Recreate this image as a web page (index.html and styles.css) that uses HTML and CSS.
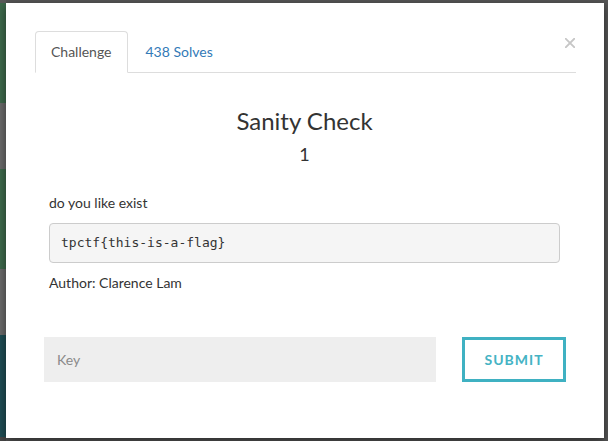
FILE: index.html
```html
<!DOCTYPE html>
<html lang="en">
<head>
<meta charset="utf-8">
<title>Sanity Check</title>
<link rel="stylesheet" href="styles.css">
</head>
<body>
  <div class="modal">
    <div class="tabs">
      <div class="tab active">Challenge</div>
      <div class="tab link">438 Solves</div>
      <button class="close" aria-label="Close">
        <svg width="10" height="10" viewBox="0 0 10 10"><path d="M0.8 0.8 L9.2 9.2 M9.2 0.8 L0.8 9.2" stroke="#c6c6c6" stroke-width="1.9" stroke-linecap="square"/></svg>
      </button>
    </div>
    <div class="pane">
      <h3 class="title">Sanity Check</h3>
      <h4 class="value">1</h4>
      <p class="desc">do you like exist</p>
      <pre class="flag">tpctf{this-is-a-flag}</pre>
      <p class="author">Author: Clarence Lam</p>
    </div>
    <form class="submit-row" onsubmit="return false">
      <input class="key" type="text" placeholder="Key">
      <button class="submit" type="submit">Submit</button>
    </form>
  </div>
</body>
</html>
```
FILE: styles.css
```css
html, body {
  margin: 0;
  height: 100%;
}
body {
  box-sizing: border-box;
  padding: 3px 4px 3px 6px;
  background-color: #555555;
  background-image: linear-gradient(to bottom,
    #5b5b5b 0 3px,
    #3e6a4c 3px 103px,
    #6a6a6a 103px 169px,
    #3e6a4c 169px 269px,
    #6a6a6a 269px 335px,
    #1f4d54 335px 437px,
    #474747 437px);
  background-size: 6px 100%;
  background-repeat: no-repeat;
  font-family: Lato, "Open Sans", sans-serif;
  color: #333;
  overflow: hidden;
}
.modal {
  box-sizing: border-box;
  width: 598px;
  height: 435px;
  background: #fff;
  padding: 28px 28px 0 29px;
  box-shadow: 0 3px 9px rgba(0, 0, 0, 0.5);
}
.tabs {
  display: flex;
  align-items: flex-start;
  border-bottom: 1px solid #dddddd;
}
.tab {
  font-size: 14px;
  line-height: 20px;
  padding: 10px 15px;
  border: 1px solid transparent;
  border-radius: 4px 4px 0 0;
  margin-right: 2px;
  margin-bottom: -1px;
}
.tab.active {
  color: #555555;
  background: #fff;
  border-color: #dddddd #dddddd transparent;
}
.tab.link {
  color: #337ab7;
}
.close {
  margin-left: auto;
  margin-top: 7px;
  margin-right: 1px;
  padding: 0;
  border: 0;
  background: none;
  width: 10px;
  height: 10px;
  display: flex;
}
.pane {
  padding: 0 16px 0 14px;
}
.title {
  margin: 35px 0 0;
  font-size: 24px;
  line-height: 1.1;
  font-weight: 400;
  text-align: center;
  color: #333;
}
.value {
  margin: 11px 0 0;
  font-size: 18px;
  line-height: 1.1;
  font-weight: 400;
  text-align: center;
  color: #333;
}
.desc {
  margin: 28px 0 10px;
  font-size: 14px;
  line-height: 20px;
}
.flag {
  margin: 0 0 10px;
  padding: 9.5px 11px;
  font-family: "DejaVu Sans Mono", "Liberation Mono", monospace;
  font-size: 13px;
  line-height: 1.42857;
  color: #333;
  background: #f5f5f5;
  border: 1px solid #cccccc;
  border-radius: 4px;
}
.author {
  margin: 0;
  font-size: 14px;
  line-height: 20px;
}
.submit-row {
  display: flex;
  gap: 26px;
  margin: 44px 10px 0 9px;
}
.key {
  box-sizing: border-box;
  width: 392px;
  height: 45px;
  border: 0;
  background: #eeeeee;
  padding: 0 13px;
  font-family: Lato, "Open Sans", sans-serif;
  font-size: 14px;
  color: #555;
  outline: none;
}
.key::placeholder {
  color: #8a8a8a;
}
.submit {
  flex: 1;
  box-sizing: border-box;
  height: 45px;
  border: 3px solid #3fb1c2;
  background: #fff;
  color: #45b3c4;
  font-family: Lato, "Open Sans", sans-serif;
  font-size: 14px;
  font-weight: 700;
  letter-spacing: 1px;
  text-transform: uppercase;
  padding: 0;
}
```
